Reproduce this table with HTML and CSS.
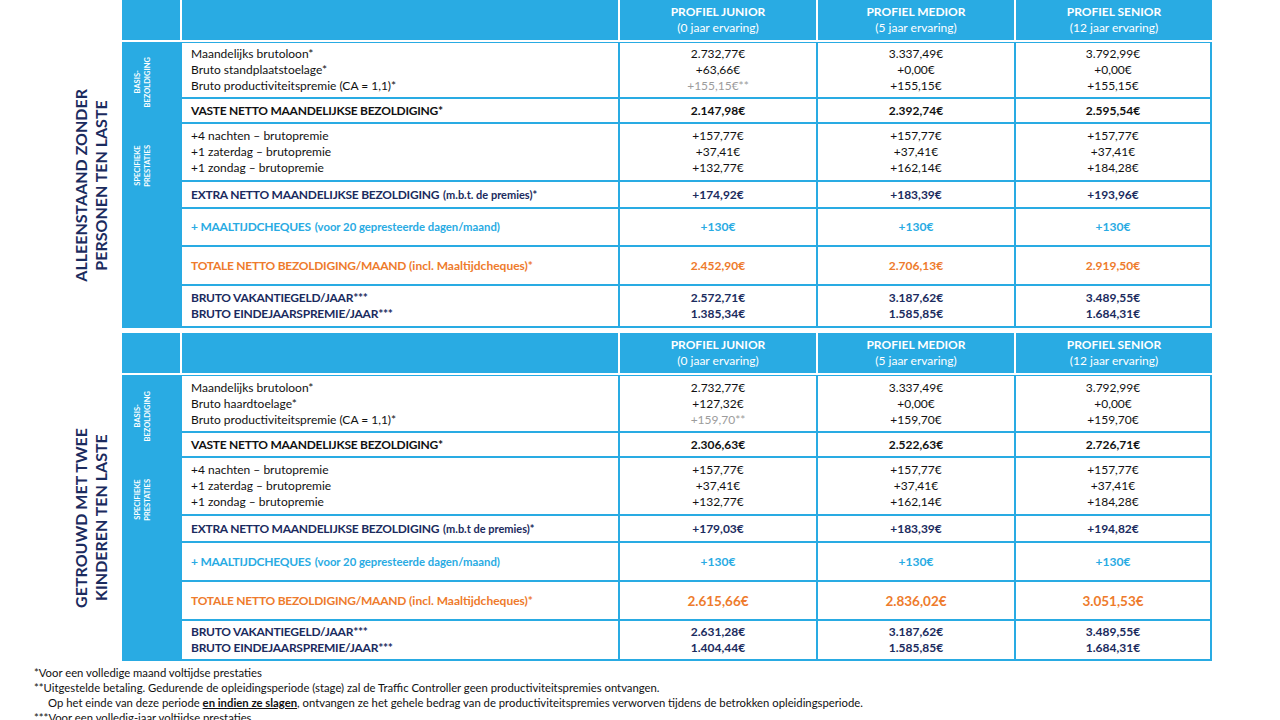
FILE: index.html
```html
<!DOCTYPE html>
<html lang="nl">
<head>
<meta charset="utf-8">
<title>Bezoldiging Traffic Controller</title>
<link rel="stylesheet" href="styles.css">
</head>
<body>
<main class="page">
  <section class="block">
    <div class="side"><h2 class="side-title">ALLEENSTAAND ZONDER<br>PERSONEN TEN LASTE</h2></div>
    <div class="sheet">
      <div class="head">
        <div class="h-cell"></div>
        <div class="h-cell"></div>
        <div class="h-cell"><strong>PROFIEL JUNIOR</strong><span>(0 jaar ervaring)</span></div>
        <div class="h-cell"><strong>PROFIEL MEDIOR</strong><span>(5 jaar ervaring)</span></div>
        <div class="h-cell"><strong>PROFIEL SENIOR</strong><span>(12 jaar ervaring)</span></div>
      </div>
      <div class="body">
        <div class="group span-2"><span class="group-text">BASIS-<br>BEZOLDIGING</span></div>
        <div class="lbl"><div>Maandelijks brutoloon*<br>Bruto standplaatstoelage*<br>Bruto productiviteitspremie (CA = 1,1)*</div></div>
        <div class="val"><div>2.732,77€<br>+63,66€<br><span class="muted">+155,15€**</span></div></div>
        <div class="val"><div>3.337,49€<br>+0,00€<br>+155,15€</div></div>
        <div class="val"><div>3.792,99€<br>+0,00€<br>+155,15€</div></div>

        <div class="lbl bold"><div class="caps">VASTE NETTO MAANDELIJKSE BEZOLDIGING*</div></div>
        <div class="val bold"><div>2.147,98€</div></div>
        <div class="val bold"><div>2.392,74€</div></div>
        <div class="val bold"><div>2.595,54€</div></div>

        <div class="group span-2"><span class="group-text">SPECIFIEKE<br>PRESTATIES</span></div>
        <div class="lbl"><div>+4 nachten – brutopremie<br>+1 zaterdag – brutopremie<br>+1 zondag – brutopremie</div></div>
        <div class="val"><div>+157,77€<br>+37,41€<br>+132,77€</div></div>
        <div class="val"><div>+157,77€<br>+37,41€<br>+162,14€</div></div>
        <div class="val"><div>+157,77€<br>+37,41€<br>+184,28€</div></div>

        <div class="lbl bold navy"><div><span class="caps">EXTRA NETTO MAANDELIJKSE BEZOLDIGING</span> <small class="note">(m.b.t. de premies)*</small></div></div>
        <div class="val bold navy"><div>+174,92€</div></div>
        <div class="val bold navy"><div>+183,39€</div></div>
        <div class="val bold navy"><div>+193,96€</div></div>

        <div class="group span-3"></div>
        <div class="lbl bold sky"><div><span class="caps">+ MAALTIJDCHEQUES</span> <small class="note note-sky">(voor 20 gepresteerde dagen/maand)</small></div></div>
        <div class="val bold sky"><div>+130€</div></div>
        <div class="val bold sky"><div>+130€</div></div>
        <div class="val bold sky"><div>+130€</div></div>

        <div class="lbl bold orange"><div><span class="caps">TOTALE NETTO BEZOLDIGING/MAAND</span> (incl. Maaltijdcheques)*</div></div>
        <div class="val bold orange"><div>2.452,90€</div></div>
        <div class="val bold orange"><div>2.706,13€</div></div>
        <div class="val bold orange"><div>2.919,50€</div></div>

        <div class="lbl bold navy"><div class="caps">BRUTO VAKANTIEGELD/JAAR***<br>BRUTO EINDEJAARSPREMIE/JAAR***</div></div>
        <div class="val bold navy"><div>2.572,71€<br>1.385,34€</div></div>
        <div class="val bold navy"><div>3.187,62€<br>1.585,85€</div></div>
        <div class="val bold navy"><div>3.489,55€<br>1.684,31€</div></div>
      </div>
    </div>
  </section>

  <section class="block">
    <div class="side"><h2 class="side-title">GETROUWD MET TWEE<br>KINDEREN TEN LASTE</h2></div>
    <div class="sheet">
      <div class="head">
        <div class="h-cell"></div>
        <div class="h-cell"></div>
        <div class="h-cell"><strong>PROFIEL JUNIOR</strong><span>(0 jaar ervaring)</span></div>
        <div class="h-cell"><strong>PROFIEL MEDIOR</strong><span>(5 jaar ervaring)</span></div>
        <div class="h-cell"><strong>PROFIEL SENIOR</strong><span>(12 jaar ervaring)</span></div>
      </div>
      <div class="body body-b">
        <div class="group span-2"><span class="group-text">BASIS-<br>BEZOLDIGING</span></div>
        <div class="lbl"><div>Maandelijks brutoloon*<br>Bruto haardtoelage*<br>Bruto productiviteitspremie (CA = 1,1)*</div></div>
        <div class="val"><div>2.732,77€<br>+127,32€<br><span class="muted">+159,70**</span></div></div>
        <div class="val"><div>3.337,49€<br>+0,00€<br>+159,70€</div></div>
        <div class="val"><div>3.792,99€<br>+0,00€<br>+159,70€</div></div>

        <div class="lbl bold"><div class="caps">VASTE NETTO MAANDELIJKSE BEZOLDIGING*</div></div>
        <div class="val bold"><div>2.306,63€</div></div>
        <div class="val bold"><div>2.522,63€</div></div>
        <div class="val bold"><div>2.726,71€</div></div>

        <div class="group span-2"><span class="group-text">SPECIFIEKE<br>PRESTATIES</span></div>
        <div class="lbl"><div>+4 nachten – brutopremie<br>+1 zaterdag – brutopremie<br>+1 zondag – brutopremie</div></div>
        <div class="val"><div>+157,77€<br>+37,41€<br>+132,77€</div></div>
        <div class="val"><div>+157,77€<br>+37,41€<br>+162,14€</div></div>
        <div class="val"><div>+157,77€<br>+37,41€<br>+184,28€</div></div>

        <div class="lbl bold navy"><div><span class="caps">EXTRA NETTO MAANDELIJKSE BEZOLDIGING</span> <small class="note">(m.b.t de premies)*</small></div></div>
        <div class="val bold navy"><div>+179,03€</div></div>
        <div class="val bold navy"><div>+183,39€</div></div>
        <div class="val bold navy"><div>+194,82€</div></div>

        <div class="group span-3"></div>
        <div class="lbl bold sky"><div><span class="caps">+ MAALTIJDCHEQUES</span> <small class="note note-sky">(voor 20 gepresteerde dagen/maand)</small></div></div>
        <div class="val bold sky"><div>+130€</div></div>
        <div class="val bold sky"><div>+130€</div></div>
        <div class="val bold sky"><div>+130€</div></div>

        <div class="lbl bold orange"><div><span class="caps">TOTALE NETTO BEZOLDIGING/MAAND</span> (incl. Maaltijdcheques)*</div></div>
        <div class="val bold orange big"><div>2.615,66€</div></div>
        <div class="val bold orange big"><div>2.836,02€</div></div>
        <div class="val bold orange big"><div>3.051,53€</div></div>

        <div class="lbl bold navy"><div class="caps">BRUTO VAKANTIEGELD/JAAR***<br>BRUTO EINDEJAARSPREMIE/JAAR***</div></div>
        <div class="val bold navy"><div>2.631,28€<br>1.404,44€</div></div>
        <div class="val bold navy"><div>3.187,62€<br>1.585,85€</div></div>
        <div class="val bold navy"><div>3.489,55€<br>1.684,31€</div></div>
      </div>
    </div>
  </section>

  <footer class="notes">
    <p>*Voor een volledige maand voltijdse prestaties</p>
    <p>**Uitgestelde betaling. Gedurende de opleidingsperiode (stage) zal de Traffic Controller geen productiviteitspremies ontvangen.</p>
    <p class="indent">Op het einde van deze periode <b class="u">en indien ze slagen</b>, ontvangen ze het gehele bedrag van de productiviteitspremies verworven tijdens de betrokken opleidingsperiode.</p>
    <p>***Voor een volledig-jaar voltijdse prestaties</p>
  </footer>
</main>
</body>
</html>
```

FILE: styles.css
```css
* { box-sizing: border-box; }

html, body {
  margin: 0;
  padding: 0;
  background: #ffffff;
}

body {
  font-family: Lato, "Liberation Sans", sans-serif;
  color: #111111;
  font-size: 12px;
  line-height: 16px;
  width: 1280px;
  height: 720px;
  overflow: hidden;
}

.page {
  display: flex;
  flex-direction: column;
  gap: 5px;
}

.block {
  display: flex;
}

.side {
  width: 122px;
  padding: 42px 0 0 60px;
  display: flex;
  align-items: center;
  justify-content: center;
}

.side-title {
  margin: 0;
  writing-mode: vertical-rl;
  transform: rotate(180deg);
  font-size: 16px;
  line-height: 20px;
  font-weight: 700;
  color: #1b2b5e;
  text-align: center;
  white-space: nowrap;
}

.sheet {
  width: 1090px;
  background: #29abe3;
}

.head {
  display: grid;
  grid-template-columns: 58px 436px 196px 196px 1fr;
  column-gap: 2px;
  background: #ffffff;
  padding-bottom: 2px;
}

.h-cell {
  height: 40px;
  background: #29abe3;
  color: #ffffff;
  display: flex;
  flex-direction: column;
  align-items: center;
  justify-content: center;
  font-size: 12px;
  line-height: 16px;
}

.h-cell strong { font-weight: 700; }

.body {
  display: grid;
  grid-template-columns: 58px 436px 196px 196px 1fr;
  grid-template-rows: 54px 23px 56px 25px 36px 37px 40px;
  column-gap: 2px;
  row-gap: 2px;
  padding: 1px 2px 2px 0;
}

.body-b {
  grid-template-rows: 55px 23px 56px 25px 37px 37px 38px;
}

.group {
  grid-column: 1;
  background: #29abe3;
  display: flex;
  align-items: center;
  justify-content: center;
  padding-right: 16px;
}

.span-2 { grid-row: span 2; }
.span-3 { grid-row: span 3; }

.group-text {
  writing-mode: vertical-rl;
  transform: rotate(180deg);
  color: #ffffff;
  font-size: 7.5px;
  line-height: 10px;
  font-weight: 700;
  text-align: center;
  white-space: nowrap;
}

.lbl,
.val {
  background: #ffffff;
  display: flex;
  align-items: center;
}

.lbl {
  padding-left: 9px;
  white-space: nowrap;
}

.val {
  justify-content: center;
  text-align: center;
}

.caps { letter-spacing: -0.25px; }

.bold { font-weight: 700; }
.navy { color: #1b2b5e; }
.sky { color: #29abe3; }
.orange { color: #ee7b2c; }
.muted { color: #9c9c9c; }
.big { font-size: 13.5px; }

.note {
  font-size: 11px;
  margin-left: 1px;
}

.note-sky { font-size: 11.3px; }

.notes {
  margin-top: -1px;
  padding: 0 0 0 34px;
  font-size: 11.3px;
  line-height: 15px;
  color: #111111;
}

.notes p {
  margin: 0;
  white-space: nowrap;
}

.notes .indent { padding-left: 14px; }

.u {
  font-weight: 700;
  text-decoration: underline;
}
```
